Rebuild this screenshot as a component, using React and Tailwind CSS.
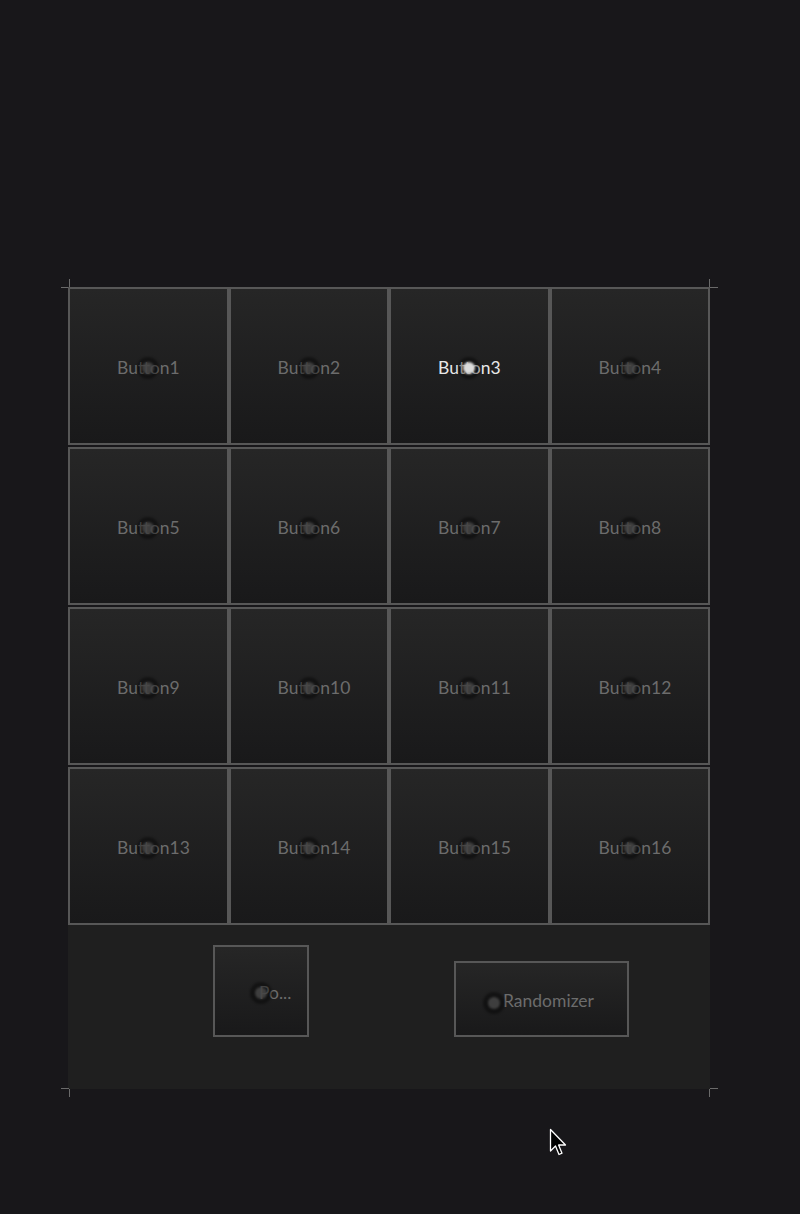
import React from "react";

const font = { fontFamily: "Lato, 'Open Sans', sans-serif" };

const Dot = ({ active }) => (
  <span className="absolute left-1/2 top-[calc(50%+1.5px)] -translate-x-1/2 -translate-y-1/2 w-[22px] h-[22px] rounded-full bg-black/40 blur-[1px] flex items-center justify-center">
    <span
      className={
        "w-[12px] h-[12px] rounded-full " +
        (active ? "bg-[#dcdcdc]" : "bg-[#4a4a4a]/80")
      }
    />
  </span>
);

const Cell = ({ label, active }) => (
  <div className="relative h-[158px] border-2 border-[#575757] bg-gradient-to-b from-[#262626] to-[#19191a] flex items-center pt-[4px]">
    <span
      className={
        "pl-[47px] text-[17.5px] " + (active ? "text-[#e8e8e8]" : "text-[#6c6c6c]")
      }
      style={font}
    >
      {label}
    </span>
    <Dot active={active} />
  </div>
);

const Corner = ({ className }) => <div className={"absolute bg-[#6a6a6a] " + className} />;

export default function App() {
  const buttons = Array.from({ length: 16 }, (_, i) => i + 1);
  return (
    <div className="relative w-[800px] h-[1214px] bg-[#18171a] overflow-hidden">
      <div className="pt-[287px] pl-[68px]">
        <div className="relative w-[642px]">
          {/* corner marks */}
          <Corner className="left-[1px] -top-[8px] w-px h-[8px]" />
          <Corner className="-left-[7px] top-0 w-[8px] h-px" />
          <Corner className="right-0 -top-[8px] w-px h-[8px]" />
          <Corner className="-right-[8px] top-0 w-[8px] h-px" />
          <Corner className="left-[1px] -bottom-[8px] w-px h-[8px]" />
          <Corner className="-left-[7px] -bottom-0 w-[8px] h-px" />
          <Corner className="right-0 -bottom-[8px] w-px h-[8px]" />
          <Corner className="-right-[8px] bottom-0 w-[8px] h-px" />

          <div className="grid grid-cols-4 gap-y-[2px]">
            {buttons.map((n) => (
              <Cell key={n} label={`Button${n}`} active={n === 3} />
            ))}
          </div>

          <div className="h-[164px] bg-[#1f1f1f] flex items-end pb-[52px] pl-[145px] gap-[145px]">
            <div className="relative w-[96px] h-[92px] border-2 border-[#575757] bg-gradient-to-b from-[#262626] to-[#19191a] flex items-center pl-[44px] pt-[4px]">
              <span className="text-[17.5px] text-[#6c6c6c]" style={font}>
                Po...
              </span>
              <Dot />
            </div>
            <div className="w-[175px] h-[76px] border-2 border-[#575757] bg-gradient-to-b from-[#262626] to-[#19191a] flex items-center justify-center pr-[5px] pt-[4px]">
              <span className="relative w-[19px] h-[22px] shrink-0">
                <Dot />
              </span>
              <span className="text-[17.5px] text-[#6c6c6c]" style={font}>
                Randomizer
              </span>
            </div>
          </div>
        </div>
      </div>

      {/* mouse cursor */}
      <svg className="absolute left-[549px] top-[1128px]" width="20" height="30" viewBox="0 0 20 30">
        <path d="M1.5 1.5 L1.5 23 L6.5 18 L10 26.5 L13 25.2 L9.6 17 L16.5 17 Z" fill="#000" stroke="#fff" strokeWidth="1.3" strokeLinejoin="round" />
      </svg>
    </div>
  );
}
